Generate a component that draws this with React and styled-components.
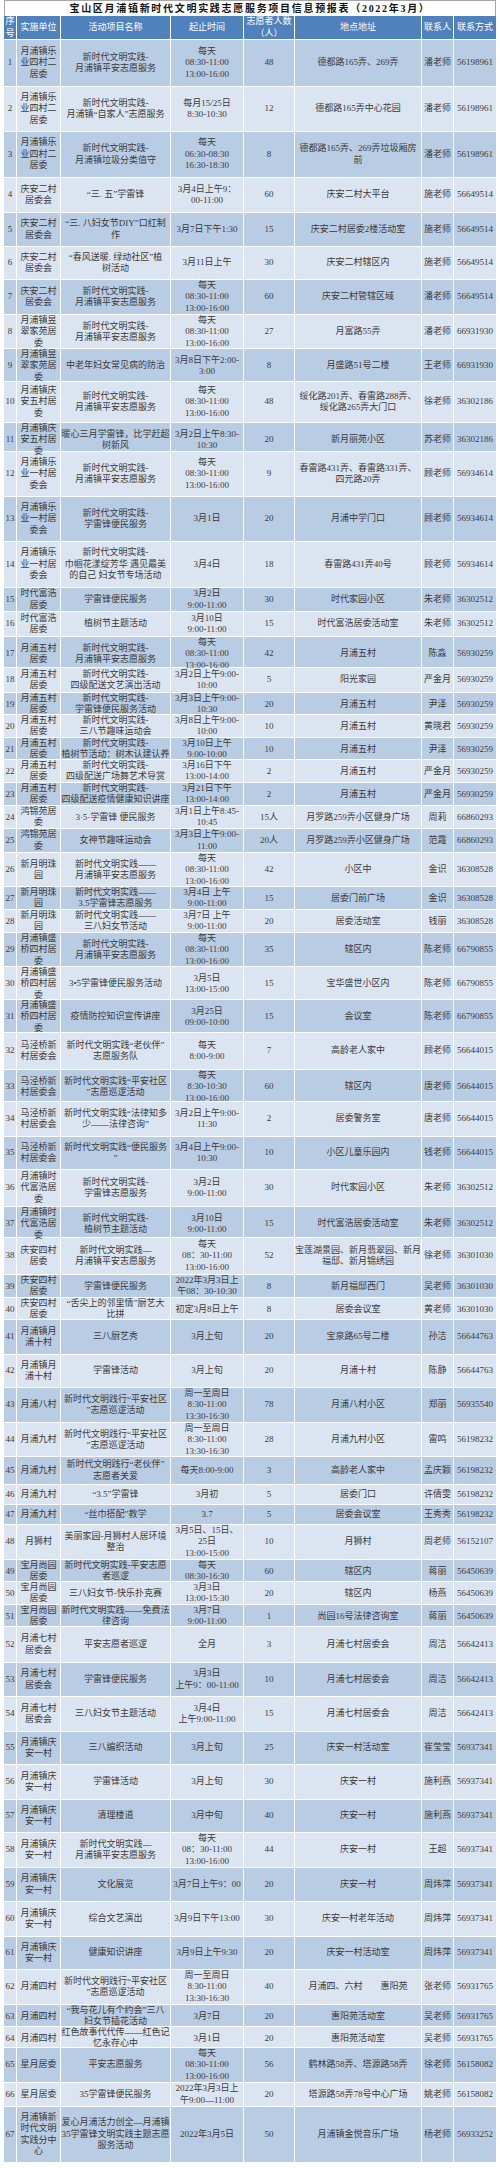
import React from "react";
import styled, { createGlobalStyle } from "styled-components";

const GlobalStyle = createGlobalStyle`
  html, body {
    margin: 0;
    padding: 0;
    background: #ffffff;
  }
  body {
    font-family: "Liberation Serif", "Noto Sans CJK SC", serif;
  }
`;

const COLS = "13px 44px 110px 73px 51px 127px 32px 42px";

const DAILY = "每天\n08:30-11:00\n13:00-16:00";
const SAFE = "新时代文明实践-\n月浦镇平安志愿服务";
const LEYE4 = "月浦镇乐\n业四村二\n居委";
const QA2 = "庆安二村\n居委会";
const YUXI = "月浦镇昱\n翠家苑居\n委";
const QA5 = "月浦镇庆\n安五村居\n委";
const LEYE1 = "月浦镇乐\n业一村居\n委会";
const SDFH = "时代富浩\n居委";
const YP5 = "月浦五村\n居委";
const HJY = "鸿锦苑居\n委";
const XYMZ = "新月明珠\n园";
const SQ4 = "月浦镇盛\n桥四村居\n委";
const MJQ = "马泾桥新\n村居委会";
const SDFH2 = "月浦镇时\n代富浩居\n委";
const QA4 = "庆安四村\n居委";
const YP10 = "月浦镇月\n浦十村";
const BYSY = "宝月尚园\n居委";
const YP7 = "月浦七村\n居委会";
const QA1 = "月浦镇庆\n安一村";
const PATROL = "新时代文明践行“平安社区\n”志愿巡逻活动";
const WEEK = "周一至周日\n8:30-11:00\n13:30-16:30";

// [row height, unit, activity, time, volunteers, place, contact, phone]
const rows = [
  [47, LEYE4, SAFE, DAILY, "48", "德都路165弄、269弄", "潘老师", "56198961"],
  [45, LEYE4, "新时代文明实践-\n月浦镇“自家人”志愿服务", "每月15/25日\n8:30-10:30", "12", "德都路165弄中心花园", "潘老师", "56198961"],
  [46, LEYE4, "新时代文明实践-\n月浦镇垃圾分类值守", "每天\n06:30-08:30\n16:30-18:30", "8", "德都路165弄、269弄垃圾厢房\n前", "潘老师", "56198961"],
  [35, QA2, "“三. 五”学雷锋", "3月4日上午9：\n00-11:00", "60", "庆安二村大平台", "施老师", "56649514"],
  [34, QA2, "“三. 八妇女节DIY”口红制\n作", "3月7日下午1:30", "15", "庆安二村居委2楼活动室", "施老师", "56649514"],
  [33, QA2, "“春风送暖. 绿动社区”植\n树活动", "3月11日上午", "30", "庆安二村辖区内", "施老师", "56649514"],
  [35, QA2, SAFE, DAILY, "60", "庆安二村管辖区域", "潘老师", "56649514"],
  [34, YUXI, SAFE, DAILY, "27", "月富路55弄", "潘老师", "66931930"],
  [33, YUXI, "中老年妇女常见病的防治", "3月8日下午2:00-\n3:00", "8", "月盛路51号二楼", "王老师", "66931930"],
  [41, QA5, SAFE, DAILY, "48", "绥化路201弄、春雷路288弄、\n绥化路265弄大门口", "徐老师", "36302186"],
  [29, QA5, "暖心三月学雷锋，比学赶超\n树新风", "3月2日上午8:30-\n10:30", "20", "新月丽苑小区", "苏老师", "36302186"],
  [45, LEYE1, SAFE, DAILY, "9", "春雷路431弄、春雷路331弄、\n四元路20弄", "顾老师", "56934614"],
  [45, LEYE1, "新时代文明实践-\n学雷锋便民服务", "3月1日", "20", "月浦中学门口", "顾老师", "56934614"],
  [46, LEYE1, "新时代文明实践-\n巾帼花漾绽芳华 遇见最美\n的自己 妇女节专场活动", "3月4日", "18", "春雷路431弄40号", "顾老师", "56934614"],
  [24, SDFH, "学雷锋便民服务", "3月2日\n9:00-11:00", "30", "时代家园小区", "朱老师", "36302512"],
  [25, SDFH, "植树节主题活动", "3月10日\n9:00-11:00", "15", "时代富浩居委活动室", "朱老师", "36302512"],
  [31, YP5, SAFE, DAILY, "42", "月浦五村", "陈淼", "56930259"],
  [25, YP5, "新时代文明实践-\n四级配送文艺演出活动", "3月2日上午9:00-\n10:00", "5", "阳光家园", "严金月", "56930259"],
  [22, YP5, "新时代文明实践-\n学雷锋便民服务活动", "3月3日上午9:00-\n10:30", "20", "月浦五村", "尹泽", "56930259"],
  [23, YP5, "新时代文明实践-\n三八节趣味运动会", "3月8日上午9:00-\n10:00", "10", "月浦五村", "黄晓君", "56930259"],
  [22, YP5, "新时代文明实践-\n植树节活动：树木认建认养", "3月10日上午\n9:00-10:00", "10", "月浦五村", "尹泽", "56930259"],
  [23, YP5, "新时代文明实践-\n四级配送广场舞艺术导赏", "3月16日下午\n13:00-14:00", "2", "月浦五村", "严金月", "56930259"],
  [23, YP5, "新时代文明实践-\n四级配送疫情健康知识讲座", "3月21日下午\n13:00-14:00", "2", "月浦五村", "严金月", "56930259"],
  [23, HJY, "3·5·学雷锋 便民服务", "3月1日上午8:45-\n10:45", "15人", "月罗路259弄小区健身广场", "周莉", "66860293"],
  [24, HJY, "女神节趣味运动会", "3月3日上午9:00-\n11:00", "20人", "月罗路259弄小区健身广场", "范霞", "66860293"],
  [34, XYMZ, "新时代文明实践——\n月浦镇平安志愿服务", DAILY, "42", "小区中", "金识", "36308528"],
  [23, XYMZ, "新时代文明实践——\n3.5学雷锋志愿服务", "3月4日 上午\n9:00-11:00", "15", "居委门前广场", "金识", "36308528"],
  [23, XYMZ, "新时代文明实践——\n三八妇女节活动", "3月7日 上午\n9:00-11:00", "20", "居委活动室", "钱丽", "36308528"],
  [34, SQ4, SAFE, DAILY, "35", "辖区内", "陈老师", "66790855"],
  [33, SQ4, "3•5学雷锋便民服务活动", "3月5日\n13:00-15:00", "15", "宝华盛世小区内", "陈老师", "66790855"],
  [33, SQ4, "疫情防控知识宣传讲座", "3月25日\n09:00-10:00", "15", "会议室", "陈老师", "66790855"],
  [37, MJQ, "新时代文明实践“老伙伴”\n志愿服务队", "每天\n8:00-9:00", "7", "高龄老人家中", "顾老师", "56644015"],
  [32, MJQ, "新时代文明实践“平安社区\n”志愿巡逻活动", "每天\n8:30-10:30\n13:00-16:00", "60", "辖区内", "唐老师", "56644015"],
  [35, MJQ, "新时代文明实践“法律知多\n少——法律咨询”", "3月2日上午9:00-\n11:30", "2", "居委警务室", "唐老师", "56644015"],
  [33, MJQ, "新时代文明实践“便民服务\n”", "3月4日上午9:00-\n10:30", "10", "小区儿童乐园内", "钱老师", "56644015"],
  [37, SDFH2, "新时代文明实践-\n学雷锋志愿服务", "3月2日\n9:00-11:00", "30", "时代家园小区", "朱老师", "36302512"],
  [31, SDFH2, "新时代文明实践-\n植树节主题活动", "3月10日\n9:00-11:00", "15", "时代富浩居委活动室", "朱老师", "36302512"],
  [37, QA4, "新时代文明实践—\n月浦镇平安志愿服务", "每天\n08：30-11:00\n13:00-16:00", "52", "宝莲湖景园、新月翡翠园、新月\n福邸、新月锦绣园", "徐老师", "36301030"],
  [23, QA4, "学雷锋便民服务", "2022年3月3日上\n午08：30-10:30", "8", "新月福邸西门", "吴老师", "36301030"],
  [22, QA4, "“舌尖上的邻里情”厨艺大\n比拼", "初定3月8日上午", "8", "居委会议室", "黄老师", "36301030"],
  [35, YP10, "三八厨艺秀", "3月上旬", "20", "宝泉路65号二楼", "孙洁", "56644763"],
  [33, YP10, "学雷锋活动", "3月上旬", "20", "月浦十村", "陈静", "56644763"],
  [35, "月浦八村", PATROL, WEEK, "78", "月浦八村小区", "郑丽", "56935540"],
  [34, "月浦九村", PATROL, WEEK, "28", "月浦九村小区", "雷鸣", "56198232"],
  [28, "月浦九村", "新时代文明践行“老伙伴”\n志愿者关爱", "每天8:00-9:00", "3", "高龄老人家中", "孟庆颖", "56198232"],
  [20, "月浦九村", "“3.5”学雷锋", "3月初", "5", "居委门口", "许倩雯", "56198232"],
  [20, "月浦九村", "“丝巾搭配”教学", "3.7", "5", "居委会议室", "王秀秀", "56198232"],
  [35, "月狮村", "美丽家园-月狮村人居环境\n整治", "3月5日、15日、\n25日\n13:00-15:00", "10", "月狮村", "周老师", "56152107"],
  [22, BYSY, "新时代文明实践-平安志愿\n者巡逻", "每天\n08:30-16:30", "60", "辖区内", "蒋丽", "56450639"],
  [23, BYSY, "三八妇女节-快乐扑克赛", "3月3日\n13:00-15:30", "20", "辖区内", "杨燕", "56450639"],
  [22, BYSY, "新时代文明实践——免费法\n律咨询", "3月7日\n9:00-11:00", "1", "尚园16号法律咨询室", "蒋丽", "56450639"],
  [36, YP7, "平安志愿者巡逻", "全月", "3", "月浦七村居委会", "周洁", "56642413"],
  [34, YP7, "学雷锋便民服务", "3月3日\n上午9：00-11:00", "10", "月浦七村居委会", "周洁", "56642413"],
  [35, YP7, "三八妇女节主题活动", "3月4日\n上午9:00-11:00", "15", "月浦七村居委会", "周洁", "56642413"],
  [33, QA1, "三八编织活动", "3月上旬", "25", "庆安一村活动室", "崔莹莹", "56937341"],
  [35, QA1, "学雷锋活动", "3月上旬", "30", "庆安一村", "施利燕", "56937341"],
  [33, QA1, "清理楼道", "3月中旬", "40", "庆安一村", "施利燕", "56937341"],
  [35, QA1, "新时代文明实践—\n月浦镇平安志愿服务", "每天\n08：30-11:00\n13:00-16:00", "44", "庆安一村", "王超", "56937341"],
  [34, QA1, "文化展览", "3月7日上午9：00", "20", "庆安一村", "周炜萍", "56937341"],
  [35, QA1, "综合文艺演出", "3月9日下午13:00", "30", "庆安一村老年活动", "周炜萍", "56937341"],
  [33, QA1, "健康知识讲座", "3月9日上午9:30", "20", "庆安一村活动室", "周炜萍", "56937341"],
  [35, "月浦四村", PATROL, WEEK, "40", "月浦四、六村　　惠阳苑", "张老师", "56931765"],
  [22, "月浦四村", "“我与花儿有个约会”三八\n妇女节插花活动", "3月7日", "20", "惠阳苑活动室", "吴老师", "56931765"],
  [21, "月浦四村", "红色故事代代传——红色记\n忆永存心中", "3月1日", "20", "惠阳苑活动室", "吴老师", "56931765"],
  [35, "星月居委", "平安志愿服务", DAILY, "56", "鹤林路58弄、塔源路58弄", "徐老师", "56158082"],
  [24, "星月居委", "35学雷锋便民服务", "2022年3月3日上\n午9:00—11:00", "20", "塔源路58弄78号中心广场", "姚老师", "56158082"],
  [56, "月浦镇新\n时代文明\n实践分中\n心", "爱心月浦活力创全—月浦镇\n35学雷锋文明实践主题志愿\n服务活动", "2022年3月5日", "50", "月浦镇金悦音乐广场", "杨老师", "56933252"],
];

const headers = ["序\n号", "实施单位", "活动项目名称", "起止时间", "志愿者人数\n（人）", "地点地址", "联系人", "联系方式"];

const Sheet = styled.div`
  width: 492px;
  margin: 0 4px;
  padding-bottom: 5px;
  color: #3a3a3a;
  font-size: 9px;
  line-height: 11.4px;
`;

const Title = styled.div`
  height: 16px;
  box-sizing: border-box;
  border: 1px solid #a6a6a6;
  border-bottom: none;
  display: flex;
  align-items: center;
  justify-content: center;
  font-size: 10px;
  font-weight: bold;
  letter-spacing: 1.7px;
  color: #111111;
  background: #ffffff;
`;

const Row = styled.div`
  display: grid;
  grid-template-columns: ${COLS};
  height: ${(p) => p.$h}px;
  box-sizing: border-box;
  border-bottom: 1px solid #ffffff;
  background: ${(p) => (p.$head ? "#4f81bd" : p.$odd ? "#b8cce4" : "#dbe5f1")};
  color: ${(p) => (p.$head ? "#ffffff" : "inherit")};
`;

const Cell = styled.div`
  display: flex;
  align-items: center;
  justify-content: center;
  text-align: center;
  white-space: pre;
  min-width: 0;
  border-right: 1px solid #ffffff;
  &:last-child {
    border-right: none;
  }
`;

export default function App() {
  return (
    <>
      <GlobalStyle />
      <Sheet>
        <Title>宝山区月浦镇新时代文明实践志愿服务项目信息预报表（2022年3月）</Title>
        <Row $head $h={24}>
          {headers.map((h) => (
            <Cell key={h}>{h}</Cell>
          ))}
        </Row>
        {rows.map(([h, ...cells], i) => (
          <Row key={i} $h={h} $odd={i % 2 === 0}>
            <Cell>{i + 1}</Cell>
            {cells.map((c, j) => (
              <Cell key={j}>{c}</Cell>
            ))}
          </Row>
        ))}
      </Sheet>
    </>
  );
}
